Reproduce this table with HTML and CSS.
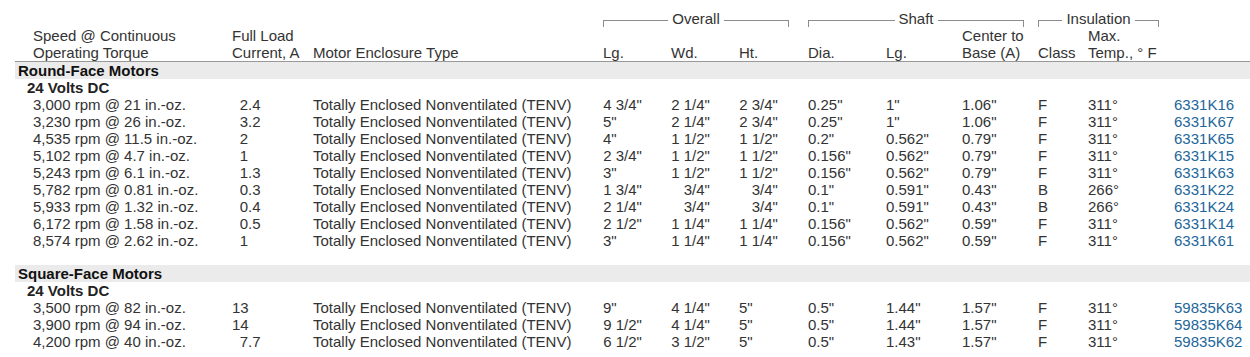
FILE: index.html
```html
<!DOCTYPE html>
<html lang="en">
<head>
<meta charset="utf-8">
<title>DC Motors</title>
<link rel="stylesheet" href="styles.css">
</head>
<body>
<div class="wrap">
<table class="spec">
  <colgroup>
    <col class="c-speed"><col class="c-amp"><col class="c-encl"><col class="c-lg"><col class="c-wd"><col class="c-ht"><col class="c-dia"><col class="c-slg"><col class="c-ctb"><col class="c-cls"><col class="c-tmp"><col class="c-pn">
  </colgroup>
  <thead>
    <tr class="grp-row">
      <th></th><th></th><th></th>
      <th colspan="3" class="grp grp-overall"><div class="bracket"><span class="seg l"></span><span class="glabel">Overall</span><span class="seg r"></span></div></th>
      <th colspan="3" class="grp grp-shaft"><div class="bracket"><span class="seg l"></span><span class="glabel">Shaft</span><span class="seg r"></span></div></th>
      <th colspan="2" class="grp grp-ins"><div class="bracket"><span class="seg l"></span><span class="glabel">Insulation</span><span class="seg r"></span></div></th>
      <th></th>
    </tr>
    <tr class="col-row">
      <th class="first">Speed @ Continuous<br>Operating Torque</th>
      <th>Full Load<br>Current, A</th>
      <th>Motor Enclosure Type</th>
      <th>Lg.</th>
      <th>Wd.</th>
      <th>Ht.</th>
      <th>Dia.</th>
      <th>Lg.</th>
      <th>Center to<br>Base (A)</th>
      <th>Class</th>
      <th>Max.<br>Temp., ° F</th>
      <th></th>
    </tr>
  </thead>
  <tbody>
    <tr class="section"><td colspan="12">Round-Face Motors</td></tr>
    <tr class="sub"><td colspan="12">24 Volts DC</td></tr>
    <tr><td class="first">3,000 rpm @ 21 in.-oz.</td><td><span class="i">2</span>.4</td><td>Totally Enclosed Nonventilated (TENV)</td><td><span class="w">4</span> 3/4"</td><td><span class="w">2</span> 1/4"</td><td><span class="w">2</span> 3/4"</td><td>0.25"</td><td>1"</td><td>1.06"</td><td>F</td><td>311°</td><td><a href="#">6331K16</a></td></tr>
    <tr><td class="first">3,230 rpm @ 26 in.-oz.</td><td><span class="i">3</span>.2</td><td>Totally Enclosed Nonventilated (TENV)</td><td><span class="w">5"</span></td><td><span class="w">2</span> 1/4"</td><td><span class="w">2</span> 3/4"</td><td>0.25"</td><td>1"</td><td>1.06"</td><td>F</td><td>311°</td><td><a href="#">6331K67</a></td></tr>
    <tr><td class="first">4,535 rpm @ 11.5 in.-oz.</td><td><span class="i">2</span></td><td>Totally Enclosed Nonventilated (TENV)</td><td><span class="w">4"</span></td><td><span class="w">1</span> 1/2"</td><td><span class="w">1</span> 1/2"</td><td>0.2"</td><td>0.562"</td><td>0.79"</td><td>F</td><td>311°</td><td><a href="#">6331K65</a></td></tr>
    <tr><td class="first">5,102 rpm @ 4.7 in.-oz.</td><td><span class="i">1</span></td><td>Totally Enclosed Nonventilated (TENV)</td><td><span class="w">2</span> 3/4"</td><td><span class="w">1</span> 1/2"</td><td><span class="w">1</span> 1/2"</td><td>0.156"</td><td>0.562"</td><td>0.79"</td><td>F</td><td>311°</td><td><a href="#">6331K15</a></td></tr>
    <tr><td class="first">5,243 rpm @ 6.1 in.-oz.</td><td><span class="i">1</span>.3</td><td>Totally Enclosed Nonventilated (TENV)</td><td><span class="w">3"</span></td><td><span class="w">1</span> 1/2"</td><td><span class="w">1</span> 1/2"</td><td>0.156"</td><td>0.562"</td><td>0.79"</td><td>F</td><td>311°</td><td><a href="#">6331K63</a></td></tr>
    <tr><td class="first">5,782 rpm @ 0.81 in.-oz.</td><td><span class="i">0</span>.3</td><td>Totally Enclosed Nonventilated (TENV)</td><td><span class="w">1</span> 3/4"</td><td><span class="w"></span> 3/4"</td><td><span class="w"></span> 3/4"</td><td>0.1"</td><td>0.591"</td><td>0.43"</td><td>B</td><td>266°</td><td><a href="#">6331K22</a></td></tr>
    <tr><td class="first">5,933 rpm @ 1.32 in.-oz.</td><td><span class="i">0</span>.4</td><td>Totally Enclosed Nonventilated (TENV)</td><td><span class="w">2</span> 1/4"</td><td><span class="w"></span> 3/4"</td><td><span class="w"></span> 3/4"</td><td>0.1"</td><td>0.591"</td><td>0.43"</td><td>B</td><td>266°</td><td><a href="#">6331K24</a></td></tr>
    <tr><td class="first">6,172 rpm @ 1.58 in.-oz.</td><td><span class="i">0</span>.5</td><td>Totally Enclosed Nonventilated (TENV)</td><td><span class="w">2</span> 1/2"</td><td><span class="w">1</span> 1/4"</td><td><span class="w">1</span> 1/4"</td><td>0.156"</td><td>0.562"</td><td>0.59"</td><td>F</td><td>311°</td><td><a href="#">6331K14</a></td></tr>
    <tr><td class="first">8,574 rpm @ 2.62 in.-oz.</td><td><span class="i">1</span></td><td>Totally Enclosed Nonventilated (TENV)</td><td><span class="w">3"</span></td><td><span class="w">1</span> 1/4"</td><td><span class="w">1</span> 1/4"</td><td>0.156"</td><td>0.562"</td><td>0.59"</td><td>F</td><td>311°</td><td><a href="#">6331K61</a></td></tr>
    <tr class="spacer"><td colspan="12"></td></tr>
    <tr class="section"><td colspan="12">Square-Face Motors</td></tr>
    <tr class="sub"><td colspan="12">24 Volts DC</td></tr>
    <tr><td class="first">3,500 rpm @ 82 in.-oz.</td><td><span class="i">13</span></td><td>Totally Enclosed Nonventilated (TENV)</td><td><span class="w">9"</span></td><td><span class="w">4</span> 1/4"</td><td><span class="w">5"</span></td><td>0.5"</td><td>1.44"</td><td>1.57"</td><td>F</td><td>311°</td><td><a href="#">59835K63</a></td></tr>
    <tr><td class="first">3,900 rpm @ 94 in.-oz.</td><td><span class="i">14</span></td><td>Totally Enclosed Nonventilated (TENV)</td><td><span class="w">9</span> 1/2"</td><td><span class="w">4</span> 1/4"</td><td><span class="w">5"</span></td><td>0.5"</td><td>1.44"</td><td>1.57"</td><td>F</td><td>311°</td><td><a href="#">59835K64</a></td></tr>
    <tr><td class="first">4,200 rpm @ 40 in.-oz.</td><td><span class="i">7</span>.7</td><td>Totally Enclosed Nonventilated (TENV)</td><td><span class="w">6</span> 1/2"</td><td><span class="w">3</span> 1/2"</td><td><span class="w">5"</span></td><td>0.5"</td><td>1.43"</td><td>1.57"</td><td>F</td><td>311°</td><td><a href="#">59835K62</a></td></tr>
  </tbody>
</table>
</div>
</body>
</html>
```
FILE: styles.css
```css
html, body {
  margin: 0;
  padding: 0;
  background: #fff;
}
.wrap {
  padding: 10px 0 0 15px;
  font-family: "Liberation Sans", Arial, sans-serif;
  font-size: 15px;
  line-height: 17px;
  color: #333;
}
.spec {
  border-collapse: collapse;
  border-spacing: 0;
  table-layout: fixed;
  width: 1235px;
}
.c-speed { width: 217px; }
.c-amp { width: 81px; }
.c-encl { width: 290px; }
.c-lg { width: 68px; }
.c-wd { width: 68px; }
.c-ht { width: 69px; }
.c-dia { width: 78px; }
.c-slg { width: 76px; }
.c-ctb { width: 76px; }
.c-cls { width: 50px; }
.c-tmp { width: 86px; }
.c-pn { width: 76px; }

.spec th,
.spec td {
  padding: 0;
  text-align: left;
  font-weight: normal;
  white-space: nowrap;
  vertical-align: bottom;
  height: 17px;
}
.spec .first { padding-left: 18px; }

.spec .col-row th {
  border-bottom: 1px solid #999;
}
.spec .grp-overall { padding-right: 19px; }
.spec .grp-shaft { padding-right: 14px; }
.spec .grp-ins { padding-right: 15px; }
.bracket {
  display: flex;
  align-items: flex-start;
  height: 17px;
}
.seg {
  flex: 1;
  height: 6px;
  margin-top: 10px;
  border-top: 1px solid #8c8c8c;
}
.seg.l { border-left: 1px solid #8c8c8c; }
.seg.r { border-right: 1px solid #8c8c8c; }
.glabel { padding: 0 4px; }

.spec .section td {
  background: #ebebeb;
  font-weight: bold;
  color: #111;
  padding-left: 3px;
}
.spec .sub td {
  font-weight: bold;
  color: #222;
  padding-left: 12px;
}
.spec .spacer td { height: 16px; }

.i {
  display: inline-block;
  width: 16px;
  text-align: right;
}
.w {
  display: inline-block;
  min-width: 8.5px;
  text-align: right;
}
.spec a {
  color: #22669a;
  text-decoration: none;
}
```
